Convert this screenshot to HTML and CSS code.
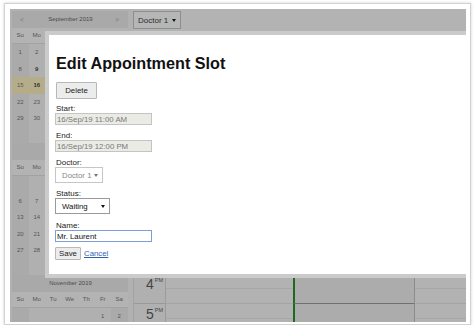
FILE: index.html
```html
<!DOCTYPE html>
<html>
<head>
<meta charset="utf-8">
<link rel="stylesheet" href="styles.css">
</head>
<body>
<div class="frame">
  <div class="app">
    <aside class="nav">
      <section class="month">
        <div class="mtitle"><span class="arr">&lt;</span><span>September 2019</span><span class="arr">&gt;</span></div>
        <div class="week names"><span>Su</span><span>Mo</span><span>Tu</span><span>We</span><span>Th</span><span>Fr</span><span>Sa</span></div>
        <div class="week"><span class="we">1</span><span>2</span><span>3</span><span>4</span><span>5</span><span>6</span><span class="we">7</span></div>
        <div class="week"><span class="we">8</span><span class="b">9</span><span class="b">10</span><span>11</span><span>12</span><span>13</span><span class="we">14</span></div>
        <div class="week sel"><span class="we">15</span><span class="b">16</span><span>17</span><span>18</span><span>19</span><span>20</span><span class="we">21</span></div>
        <div class="week"><span class="we">22</span><span>23</span><span>24</span><span>25</span><span>26</span><span>27</span><span class="we">28</span></div>
        <div class="week"><span class="we">29</span><span>30</span><span></span><span></span><span></span><span></span><span class="we"></span></div>
        <div class="week"><span class="we"></span><span></span><span></span><span></span><span></span><span></span><span class="we"></span></div>
      </section>
      <section class="month">
        <div class="mtitle"><span class="arr"></span><span>October 2019</span><span class="arr"></span></div>
        <div class="week names"><span>Su</span><span>Mo</span><span>Tu</span><span>We</span><span>Th</span><span>Fr</span><span>Sa</span></div>
        <div class="week"><span class="we"></span><span></span><span>1</span><span>2</span><span>3</span><span>4</span><span class="we">5</span></div>
        <div class="week"><span class="we">6</span><span>7</span><span>8</span><span>9</span><span>10</span><span>11</span><span class="we">12</span></div>
        <div class="week"><span class="we">13</span><span>14</span><span>15</span><span>16</span><span>17</span><span>18</span><span class="we">19</span></div>
        <div class="week"><span class="we">20</span><span>21</span><span>22</span><span>23</span><span>24</span><span>25</span><span class="we">26</span></div>
        <div class="week"><span class="we">27</span><span>28</span><span>29</span><span>30</span><span>31</span><span></span><span class="we"></span></div>
        <div class="week"><span class="we"></span><span></span><span></span><span></span><span></span><span></span><span class="we"></span></div>
      </section>
      <section class="month">
        <div class="mtitle"><span class="arr"></span><span>November 2019</span><span class="arr"></span></div>
        <div class="week names"><span>Su</span><span>Mo</span><span>Tu</span><span>We</span><span>Th</span><span>Fr</span><span>Sa</span></div>
        <div class="week"><span class="we"></span><span></span><span></span><span></span><span></span><span>1</span><span class="we">2</span></div>
      </section>
    </aside>

    <main class="sched">
      <div class="toolbar">
        <div class="tsel">Doctor 1 <span class="caret"></span></div>
      </div>
      <div class="grid">
        <div class="times">
          <div class="hour"><span class="h">4</span><span class="ap">PM</span></div>
          <div class="hour"><span class="h">5</span><span class="ap">PM</span></div>
        </div>
        <div class="cells">
          <div class="col">
            <div class="cell"></div><div class="cell half"></div>
            <div class="cell"></div><div class="cell half"></div>
          </div>
          <div class="col evcol">
            <div class="event"></div>
            <div class="event"></div>
          </div>
          <div class="col">
            <div class="cell"></div><div class="cell half"></div>
            <div class="cell"></div><div class="cell half"></div>
          </div>
        </div>
      </div>
    </main>

    <div class="modal">
      <div class="mbody">
        <h1 class="mhead">Edit Appointment Slot</h1>
        <div class="actions"><button class="btn del" type="button">Delete</button></div>
        <div class="fields">
          <div class="field">
            <label class="lbl">Start:</label>
            <input class="inp dis" type="text" value="16/Sep/19 11:00 AM" disabled>
          </div>
          <div class="field">
            <label class="lbl">End:</label>
            <input class="inp dis" type="text" value="16/Sep/19 12:00 PM" disabled>
          </div>
          <div class="field">
            <label class="lbl">Doctor:</label>
            <div class="dd dd-doc disabled"><span>Doctor 1</span><span class="caret"></span></div>
          </div>
          <div class="field">
            <label class="lbl">Status:</label>
            <div class="dd dd-status"><span>Waiting</span><span class="caret"></span></div>
          </div>
          <div class="field name">
            <label class="lbl">Name:</label>
            <input class="inp focus" type="text" value="Mr. Laurent">
          </div>
        </div>
        <div class="footer">
          <button class="btn save" type="button">Save</button>
          <a class="link" href="#">Cancel</a>
        </div>
      </div>
    </div>
  </div>
</div>
</body>
</html>
```

FILE: styles.css
```css
* { box-sizing: border-box; }

html, body {
  margin: 0;
  padding: 0;
  background: #ffffff;
}

body {
  font-family: "Liberation Sans", Arial, sans-serif;
  font-size: 8px;
  color: #000;
}

.frame {
  margin: 3px 0 0 4px;
  width: 467px;
  border: 1px solid #d2d2d2;
  box-shadow: 0 0 3px rgba(0, 0, 0, 0.18);
  padding: 5px 4px 2px 5px;
  background: #fff;
}

.app {
  position: relative;
  width: 456px;
  height: 313px;
  overflow: hidden;
  background: #b1b1b1;
  display: flex;
  align-items: flex-start;
}

/* ---------- navigator ---------- */
.nav {
  margin: 2px 0 0 2px;
  width: 116px;
  display: flex;
  flex-direction: column;
  color: #555;
  font-size: 6px;
}

.mtitle {
  height: 16.5px;
  display: flex;
  align-items: center;
  justify-content: space-between;
  padding: 0 7px 0 8px;
  background: #a9a9a9;
  color: #4a4a4a;
}

.mtitle .arr {
  color: #7c7c7c;
  font-size: 7px;
  width: 6px;
}

.week {
  height: 16.5px;
  display: grid;
  grid-template-columns: repeat(7, 16.5px);
  background: #b0b0b0;
}

.week span {
  display: flex;
  align-items: center;
  justify-content: center;
}

.week .we {
  background: #aaaaaa;
}

.names {
  border-bottom: 1px solid #a2a2a2;
  background: #b3b3b3;
}

.names span { background: transparent !important; }

.week .b { font-weight: bold; color: #333; }

.week.sel span:nth-child(1),
.week.sel span:nth-child(2) {
  background: #b5ad8a;
}

/* ---------- scheduler ---------- */
.sched {
  margin-left: 5px;
  flex: 1;
  display: flex;
  flex-direction: column;
}

.toolbar {
  height: 22px;
  padding-top: 2px;
  display: flex;
  background: #b3b3b3;
}

.tsel {
  width: 48px;
  height: 18px;
  border: 1px solid #8e8e8e;
  background: #b6b6b6;
  color: #2b2b2b;
  font-size: 8px;
  display: flex;
  align-items: center;
  justify-content: space-between;
  padding: 0 4px 0 4px;
}

.caret {
  width: 0;
  height: 0;
  border-left: 2px solid transparent;
  border-right: 2px solid transparent;
  border-top: 3px solid #111;
}

.grid {
  margin-top: 243px;
  display: flex;
  height: 60px;
}

.times {
  width: 33px;
  border-left: 1px solid #a2a2a2;
  border-right: 1px solid #9c9c9c;
  background: #b0b0b0;
  display: flex;
  flex-direction: column;
}

.hour {
  height: 30px;
  border-bottom: 1px solid #999;
  display: flex;
  justify-content: flex-end;
  padding: 3px 2px 0 0;
  color: #444;
}

.hour .h {
  font-size: 14px;
  line-height: 14px;
}

.hour .ap {
  font-size: 5.5px;
  line-height: 7px;
  margin-left: 1px;
}

.cells {
  flex: 1;
  display: flex;
}

.col {
  display: flex;
  flex-direction: column;
}

.col:first-child { width: 127px; }
.col.evcol { width: 122px; border-right: 1px solid #8c8c8c; }
.col:last-child { flex: 1; }

.cell {
  height: 15px;
  border-bottom: 1px solid #a7a7a7;
  background: #b2b2b2;
}

.cell.half { border-bottom-color: #a4a4a4; }

.event {
  height: 30px;
  background: #acacac;
  border-left: 2px solid #1c6b1c;
  border-bottom: 1px solid #6f6f6f;
}

/* ---------- modal ---------- */
.modal {
  position: absolute;
  left: 35px;
  top: 22px;
  width: 440px;
  height: 247px;
  border: 4px solid #cbcbcb;
  background: #fff;
}

.mbody {
  padding: 18px 0 0 6px;
  display: flex;
  flex-direction: column;
  align-items: flex-start;
}

.mhead {
  margin: 0 0 0 1px;
  font-size: 16.2px;
  line-height: 20px;
  font-weight: bold;
  color: #111;
}

.actions {
  margin-top: 9px;
  padding-left: 1px;
}

.btn {
  font-family: "Liberation Sans", Arial, sans-serif;
  font-size: 7.8px;
  color: #222;
  background: #ececec;
  border: 1px solid #b8b8b8;
  border-radius: 1px;
  padding: 0;
  margin: 0;
}

.del {
  width: 41px;
  height: 17px;
}

.fields {
  margin-top: 6px;
  display: flex;
  flex-direction: column;
  gap: 7px;
}

.field {
  display: flex;
  flex-direction: column;
  align-items: flex-start;
}

.field.name { margin-top: 1px; }

.lbl {
  display: block;
  height: 8px;
  line-height: 8px;
  font-size: 8px;
  color: #222;
  padding-left: 1px;
}

.inp {
  width: 97px;
  height: 12px;
  margin: 0;
  padding: 0 0 0 1px;
  font-family: "Liberation Sans", Arial, sans-serif;
  font-size: 7.8px;
  border: 1px solid #c4c4c4;
  border-radius: 0;
  outline: none;
}

.inp.dis {
  background: #ebebe6;
  color: #777;
}

.inp.focus {
  background: #fff;
  color: #111;
  border-color: #7f9ed6;
}

.dd {
  height: 16px;
  border: 1px solid #c6c6c6;
  background: #fff;
  display: flex;
  align-items: center;
  justify-content: space-between;
  padding: 0 4px 0 6px;
  font-size: 7.8px;
  color: #111;
}

.dd-doc { width: 48px; color: #888; }
.dd-doc .caret { border-top-color: #777; }
.dd-status { width: 55px; border-color: #9a9a9a; }

.footer {
  margin-top: 5px;
  display: flex;
  align-items: center;
  gap: 3px;
}

.save {
  width: 26px;
  height: 13px;
}

.link,
.link:visited {
  color: #2f5fb3;
  font-size: 7.8px;
  text-decoration: underline;
}
```
